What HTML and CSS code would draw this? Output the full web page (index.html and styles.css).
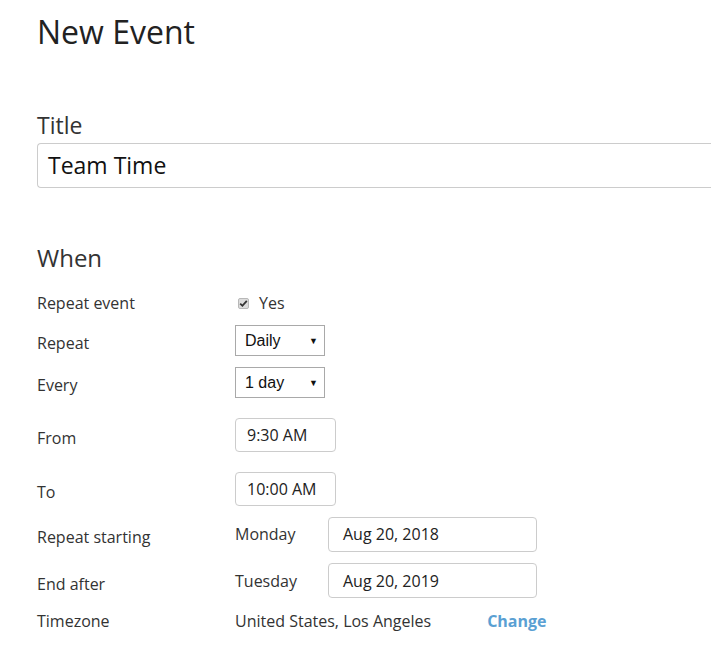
FILE: index.html
```html
<!DOCTYPE html>
<html>
<head>
<meta charset="utf-8">
<link rel="stylesheet" href="styles.css">
</head>
<body>
<div class="page">
  <h1 class="page-title">New Event</h1>
  <section class="title-section">
    <h2 class="section-title">Title</h2>
    <div class="title-input">Team Time</div>
  </section>
  <section class="when-section">
    <h2 class="section-title when">When</h2>
    <div class="form-grid">
      <div class="label plain">Repeat event</div>
      <div class="value">
        <span class="checkbox"><svg width="9" height="9" viewBox="0 0 9 9"><path d="M1.2 4.6 L3.4 6.8 L7.8 1.8" fill="none" stroke="#333" stroke-width="1.8"/></svg></span>
        <span class="yes">Yes</span>
      </div>

      <div class="label">Repeat</div>
      <div class="value"><div class="select">Daily<span class="arrow">▼</span></div></div>

      <div class="label">Every</div>
      <div class="value"><div class="select">1 day<span class="arrow">▼</span></div></div>

      <div class="label">From</div>
      <div class="value"><div class="time-input">9:30 AM</div></div>

      <div class="label">To</div>
      <div class="value"><div class="time-input">10:00 AM</div></div>

      <div class="label">Repeat starting</div>
      <div class="value"><span class="day">Monday</span><div class="date-input">Aug 20, 2018</div></div>

      <div class="label">End after</div>
      <div class="value"><span class="day">Tuesday</span><div class="date-input">Aug 20, 2019</div></div>

      <div class="label plain">Timezone</div>
      <div class="value"><span class="tz">United States, Los Angeles</span><span class="change">Change</span></div>
    </div>
  </section>
</div>
</body>
</html>
```
FILE: styles.css
```css
html, body {
  margin: 0;
  padding: 0;
  background: #fff;
}
body {
  font-family: "Open Sans", "Liberation Sans", sans-serif;
  color: #333;
  overflow: hidden;
}
.page {
  padding-left: 37px;
}
.page-title {
  margin: 0;
  padding-top: 11px;
  font-size: 32px;
  font-weight: 400;
  line-height: 42px;
  color: #222;
}
.title-section {
  margin-top: 57px;
}
.section-title {
  margin: 0;
  font-size: 23px;
  font-weight: 400;
  line-height: 30px;
  color: #333;
}
.title-input {
  margin-top: 3px;
  height: 45px;
  box-sizing: border-box;
  border: 1px solid #ccc;
  border-right: none;
  border-radius: 4px 0 0 4px;
  padding-left: 10px;
  font-size: 23px;
  line-height: 42px;
  color: #111;
}
.when-section {
  margin-top: 55px;
}
.section-title.when {
  font-size: 24px;
}
.form-grid {
  display: grid;
  grid-template-columns: 198px auto;
  grid-template-rows: 30px 44px 40px 66px 41px 50px 43px 38px;
  margin-top: 15px;
}
.label {
  display: flex;
  align-items: center;
  padding-top: 6px;
  box-sizing: border-box;
  font-size: 16px;
  color: #333;
}
.label.plain {
  padding-top: 0;
}
.value {
  display: flex;
  align-items: center;
  font-size: 16px;
  color: #333;
}
.checkbox {
  width: 11px;
  height: 11px;
  box-sizing: border-box;
  margin-left: 3px;
  border: 1px solid #b8b8b8;
  border-radius: 2px;
  background: #dcdcdc;
  display: flex;
  align-items: center;
  justify-content: center;
}
.yes {
  margin-left: 10px;
}
.select {
  width: 90px;
  height: 31px;
  box-sizing: border-box;
  border: 1px solid #a9a9a9;
  padding-left: 9px;
  padding-right: 6px;
  padding-top: 2px;
  display: flex;
  align-items: center;
  justify-content: space-between;
  font-family: "Liberation Sans", Arial, sans-serif;
  font-size: 16px;
  color: #111;
}
.arrow {
  font-size: 9px;
  color: #111;
}
.time-input {
  width: 101px;
  height: 34px;
  box-sizing: border-box;
  border: 1px solid #ccc;
  border-radius: 4px;
  padding-left: 11px;
  display: flex;
  align-items: center;
  color: #222;
}
.day {
  width: 93px;
}
.date-input {
  width: 209px;
  height: 35px;
  box-sizing: border-box;
  border: 1px solid #ccc;
  border-radius: 4px;
  padding-left: 14px;
  display: flex;
  align-items: center;
  color: #222;
}
.change {
  margin-left: 56px;
  font-weight: 700;
  color: #5aa0d3;
}
```
